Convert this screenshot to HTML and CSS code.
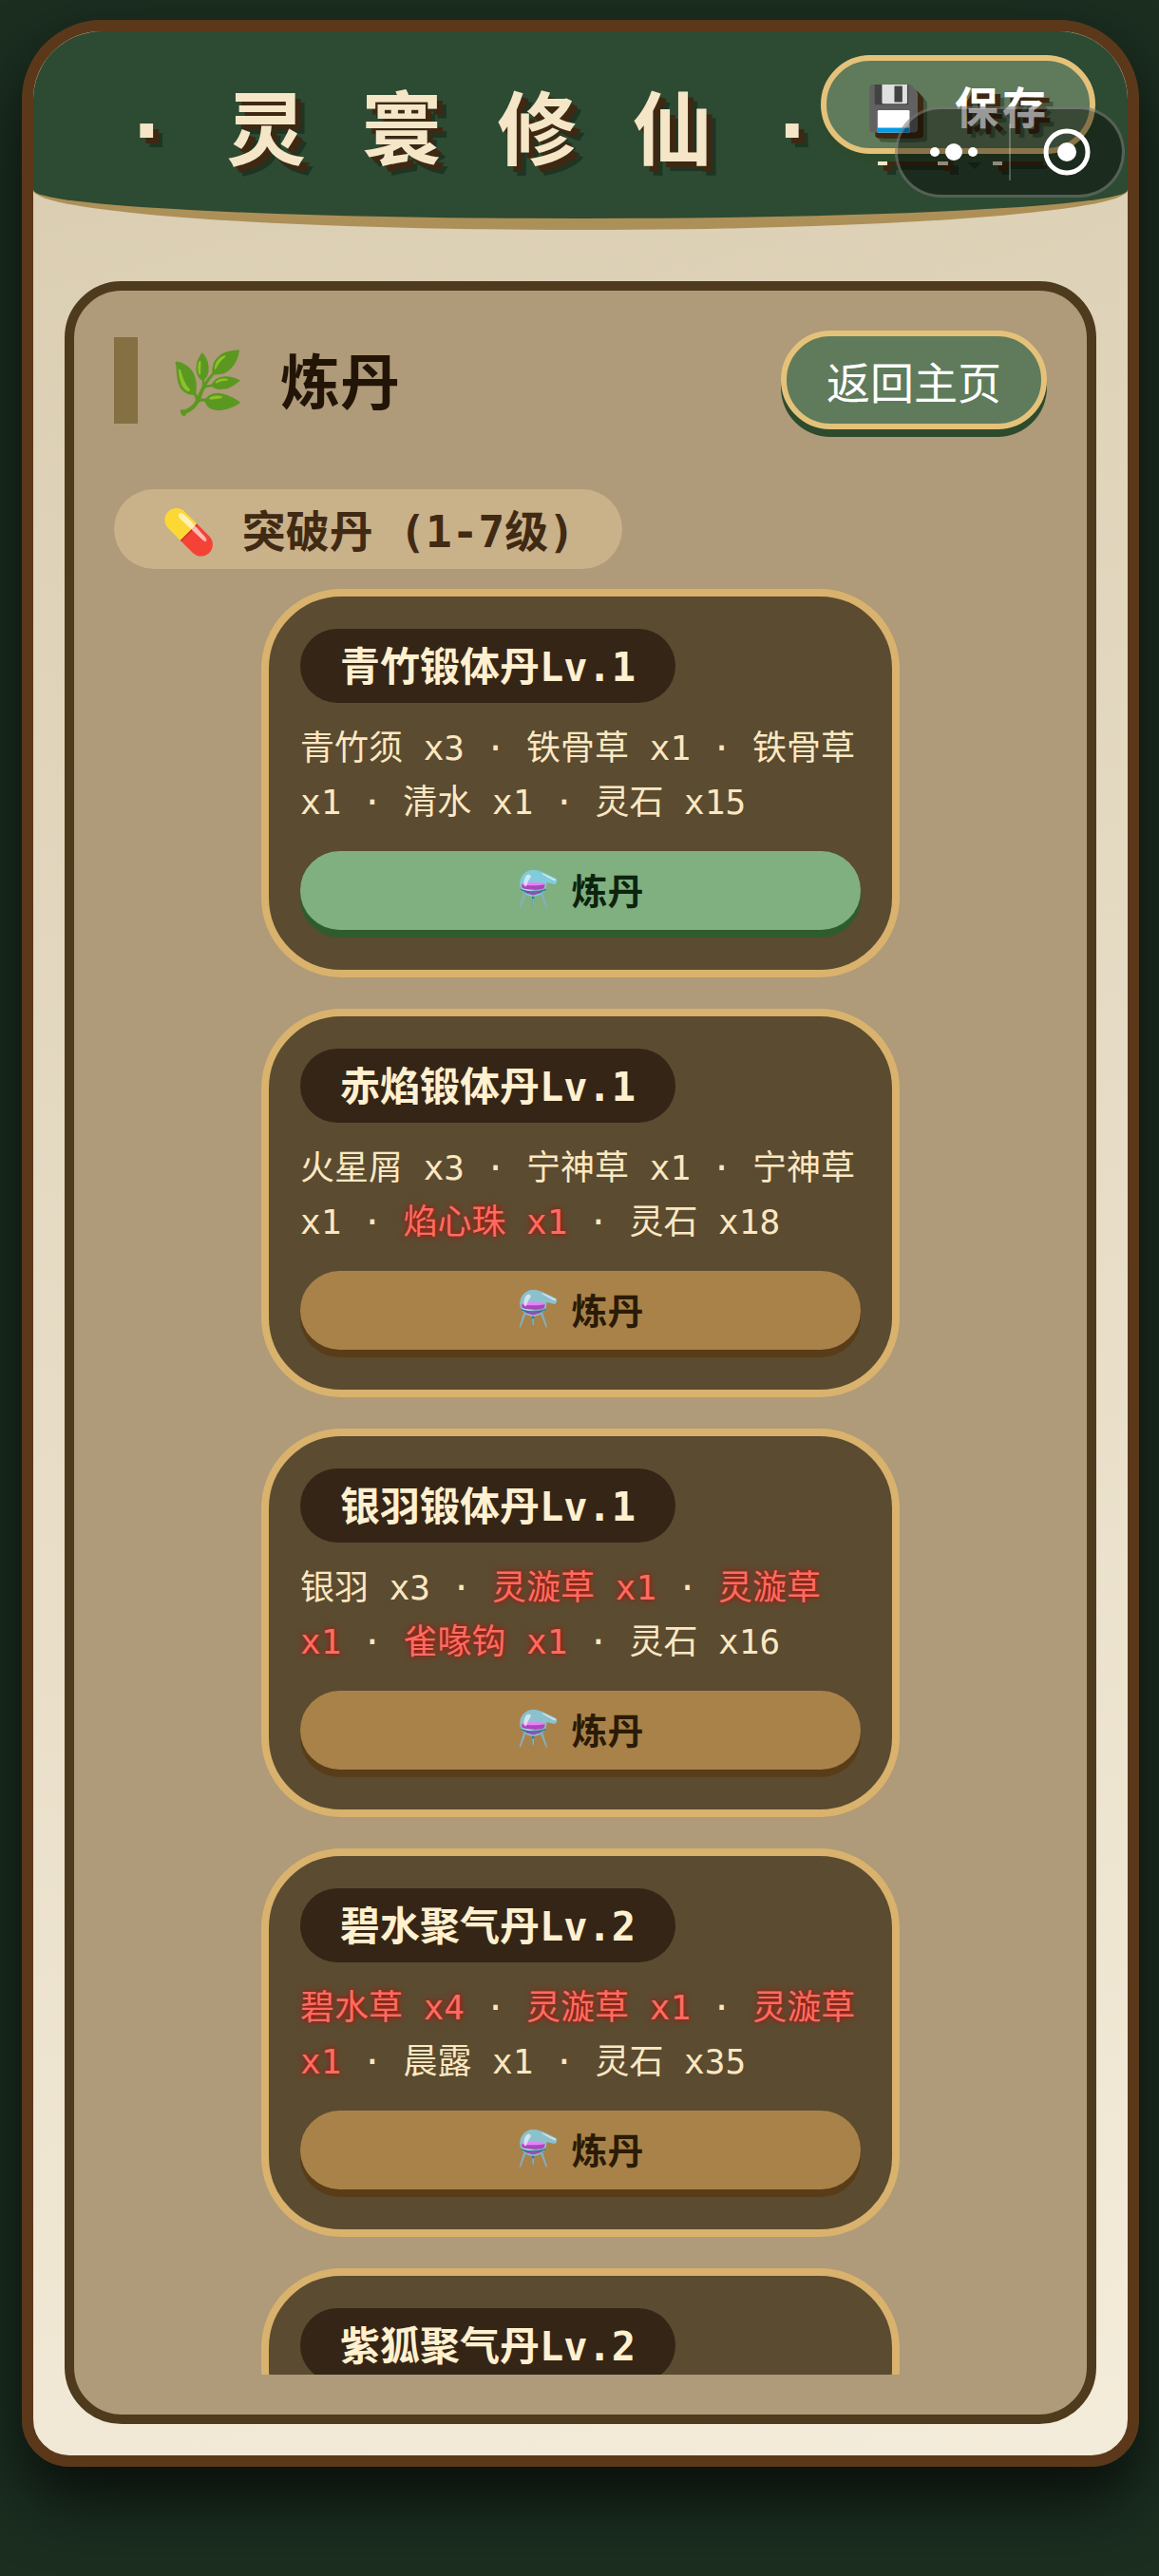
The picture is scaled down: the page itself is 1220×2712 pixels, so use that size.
FILE: index.html
```html
<!DOCTYPE html>
<html lang="zh-CN">
<head>
    <meta charset="UTF-8">
    <meta name="viewport" content="width=device-width, initial-scale=1.0">
    <title>灵寰修仙</title>
    <link rel="stylesheet" href="styles.css">
</head>
<body>
    <div class="app">
        <header class="app-header">
            <h1>· 灵 寰 修 仙 ·</h1>
            <svg class="title-ornament" viewBox="0 0 184 16" width="184" height="16" aria-hidden="true">
                <path fill="#1f3524" d="M10 4h75v10h-9v-5H19v5h-9zM94 1h15l-7 7zM130 4h48v4h-39v6h-9z"/>
                <path fill="#3e2812" d="M6 0h73v10h-9V5H15v5H6zM127 0h47v4h-38v6h-9z"/>
                <path fill="#f5e6c8" d="M0 0h10v4H0zM63 0h11v4H63zM121 0h10v4h-10z"/>
            </svg>
            <button class="btn save-btn" type="button">💾 保存</button>
        </header>

        <main class="panel">
            <div class="panel-head">
                <h2>🌿 炼丹</h2>
                <button class="btn" type="button">返回主页</button>
            </div>

            <h3 class="group-title">💊 突破丹 (1-7级)</h3>

            <div class="recipe-list">
                <article class="recipe">
                    <h4>青竹锻体丹Lv.1</h4>
                    <p>青竹须 x3 · 铁骨草 x1 · 铁骨草 x1 · 清水 x1 · 灵石 x15</p>
                    <button class="craft ready" type="button"><span>⚗️</span>炼丹</button>
                </article>
                <article class="recipe">
                    <h4>赤焰锻体丹Lv.1</h4>
                    <p>火星屑 x3 · 宁神草 x1 · 宁神草 x1 · <em>焰心珠 x1</em> · 灵石 x18</p>
                    <button class="craft" type="button"><span>⚗️</span>炼丹</button>
                </article>
                <article class="recipe">
                    <h4>银羽锻体丹Lv.1</h4>
                    <p>银羽 x3 · <em>灵漩草 x1</em> · <em>灵漩草 x1</em> · <em>雀喙钩 x1</em> · 灵石 x16</p>
                    <button class="craft" type="button"><span>⚗️</span>炼丹</button>
                </article>
                <article class="recipe">
                    <h4>碧水聚气丹Lv.2</h4>
                    <p><em>碧水草 x4</em> · <em>灵漩草 x1</em> · <em>灵漩草 x1</em> · 晨露 x1 · 灵石 x35</p>
                    <button class="craft" type="button"><span>⚗️</span>炼丹</button>
                </article>
                <article class="recipe">
                    <h4>紫狐聚气丹Lv.2</h4>
                </article>
            </div>
        </main>
    </div>

    <div class="capsule">
        <button type="button" aria-label="更多">
            <svg viewBox="0 0 52 24" width="52" height="24"><circle cx="6" cy="12" r="5"/><circle cx="26" cy="12" r="9"/><circle cx="46" cy="12" r="5"/></svg>
        </button>
        <button type="button" aria-label="关闭">
            <svg viewBox="0 0 50 50" width="50" height="50"><circle class="ring" cx="25" cy="25" r="22"/><circle cx="25" cy="25" r="10"/></svg>
        </button>
    </div>
</body>
</html>
```

FILE: styles.css
```css
* {
    box-sizing: border-box;
    margin: 0;
    padding: 0;
}

body {
    font-family: "DejaVu Sans Mono", "Noto Sans CJK SC", monospace;
    background-color: #1b2e20;
    height: 100vh;
    padding: 21px 21px 115px 23px;
}

button {
    font-family: inherit;
    border: none;
    cursor: pointer;
}

.app {
    display: flex;
    flex-direction: column;
    height: 100%;
    overflow: hidden;
    border: 12px solid #5c381b;
    border-radius: 84px 84px 50px 50px;
    background: linear-gradient(165deg, #d9ccb0, #f4ecda);
    box-shadow: 0 34px 68px rgba(0, 0, 0, 0.7);
}

.app-header {
    position: relative;
    flex: none;
    height: 209px;
    padding: 38px 94px 0;
    background-color: #2d4a32;
    border-bottom: 12px solid #ad9058;
    border-radius: 0 0 50% 50% / 0 0 42px 42px;
}

h1 {
    font-size: 84px;
    line-height: 134px;
    letter-spacing: 4px;
    color: #f5e6c8;
    white-space: nowrap;
    text-shadow: 6px 6px 0 #3e2812, 10px 10px 0 #1f3524;
}

.btn {
    height: 104px;
    padding: 0 42px;
    font-size: 46px;
    color: #fff;
    white-space: nowrap;
    background-color: #5f7b5b;
    border: 6px solid #e5c27a;
    border-radius: 52px;
    box-shadow: 0 8px 0 #2d4a2d;
}

.save-btn {
    position: absolute;
    top: 25px;
    right: 34px;
    font-weight: bold;
    letter-spacing: 4px;
    text-shadow: 6px 6px 0 #3e2812, 10px 10px 0 #405a3e;
}

.title-ornament {
    position: absolute;
    top: 137px;
    left: 889px;
}

.panel {
    display: flex;
    flex: 1;
    flex-direction: column;
    min-height: 0;
    margin: 54px 33px 33px;
    padding: 42px;
    border: 10px solid #4e3b1e;
    border-radius: 60px;
    background-color: #af9a79;
}

.panel-head {
    display: flex;
    align-items: center;
    justify-content: space-between;
    margin-bottom: 63px;
}

h2 {
    padding: 6px 0 0 34px;
    border-left: 25px solid #857043;
    font-size: 63px;
    line-height: 85px;
    color: #221507;
}

.group-title {
    align-self: flex-start;
    margin-bottom: 21px;
    padding: 6px 50px 0;
    border-radius: 42px;
    font-size: 46px;
    line-height: 78px;
    color: #412a14;
    background-color: #c9b18a;
}

.recipe-list {
    display: flex;
    flex: 1;
    flex-direction: column;
    align-items: center;
    gap: 33px;
    min-height: 0;
    overflow: hidden;
}

.recipe {
    flex: none;
    width: 672px;
    padding: 34px 33px 42px;
    border: 8px solid #d9b26d;
    border-radius: 84px;
    background-color: #5b4b30;
}

.recipe h4 {
    width: fit-content;
    margin-bottom: 19px;
    padding: 4px 42px 0;
    border-radius: 39px;
    font-size: 42px;
    line-height: 74px;
    color: #fff0cf;
    background-color: #352516;
}

.recipe p {
    margin-bottom: 23px;
    font-size: 36px;
    line-height: 57px;
    color: #fbe8c2;
}

.recipe em {
    font-style: normal;
    color: #ff6b60;
    text-shadow: 0 0 6px #c00000;
}

.craft {
    display: flex;
    align-items: center;
    justify-content: center;
    gap: 12px;
    width: 100%;
    height: 83px;
    padding-bottom: 4px;
    border-radius: 42px;
    font-size: 38px;
    font-weight: bold;
    color: #2b1b05;
    background-color: #a9824a;
    box-shadow: 0 8px 0 #593d18;
}

.craft span {
    font-size: 36px;
}

.craft.ready {
    color: #0d230f;
    background-color: #80b080;
    box-shadow: 0 8px 0 #2f5c2e;
}

/* floating mini-program menu */
.capsule {
    position: absolute;
    top: 112px;
    right: 36px;
    display: flex;
    align-items: center;
    width: 242px;
    height: 96px;
    border: 3px solid rgba(255, 255, 255, 0.25);
    border-radius: 48px;
    background-color: rgba(0, 0, 0, 0.4);
}

.capsule button {
    display: flex;
    flex: 1;
    align-items: center;
    justify-content: center;
    height: 60px;
    background: none;
}

.capsule button + button {
    border-left: 2px solid rgba(255, 255, 255, 0.25);
}

.capsule svg {
    fill: #fff;
}

.capsule .ring {
    fill: none;
    stroke: #fff;
    stroke-width: 5;
}
```
